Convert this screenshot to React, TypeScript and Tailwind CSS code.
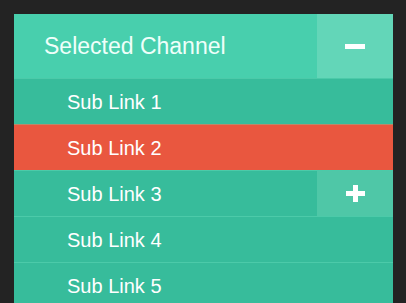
import { useState } from "react";

const links = ["Sub Link 1", "Sub Link 2", "Sub Link 3", "Sub Link 4", "Sub Link 5"];

export default function App() {
  const [open] = useState(true);

  return (
    <div className="min-h-[303px] w-full bg-[#232323] pt-[14px] pl-[14px] font-['Liberation_Sans',Arial,sans-serif]">
      <div className="w-[379px]">
        {/* header */}
        <div className="flex h-[64px] bg-[#48cfad]">
          <div className="flex flex-1 items-center pl-[30px] text-[23px] text-[#effffa]">
            Selected Channel
          </div>
          <button className="flex w-[76px] items-center justify-center bg-[#63d6b8]">
            <span className="block h-[5px] w-[20px] bg-white" />
          </button>
        </div>

        {open && (
          <ul>
            {links.map((link, i) => (
              <li
                key={link}
                className={
                  "flex h-[46px] border-t border-[#4ccaa9] " +
                  (i === 1 ? "bg-[#e9573f] border-[#b98a6a]" : "bg-[#37bc9b]")
                }
              >
                <a className="flex flex-1 items-center pl-[53px] text-[20px] text-white">
                  {link}
                </a>
                {i === 2 && (
                  <span className="relative flex w-[76px] items-center justify-center bg-[#4fc7a7]">
                    <span className="absolute h-[5px] w-[19px] bg-white" />
                    <span className="absolute h-[17px] w-[5px] bg-white" />
                  </span>
                )}
              </li>
            ))}
          </ul>
        )}
      </div>
    </div>
  );
}
